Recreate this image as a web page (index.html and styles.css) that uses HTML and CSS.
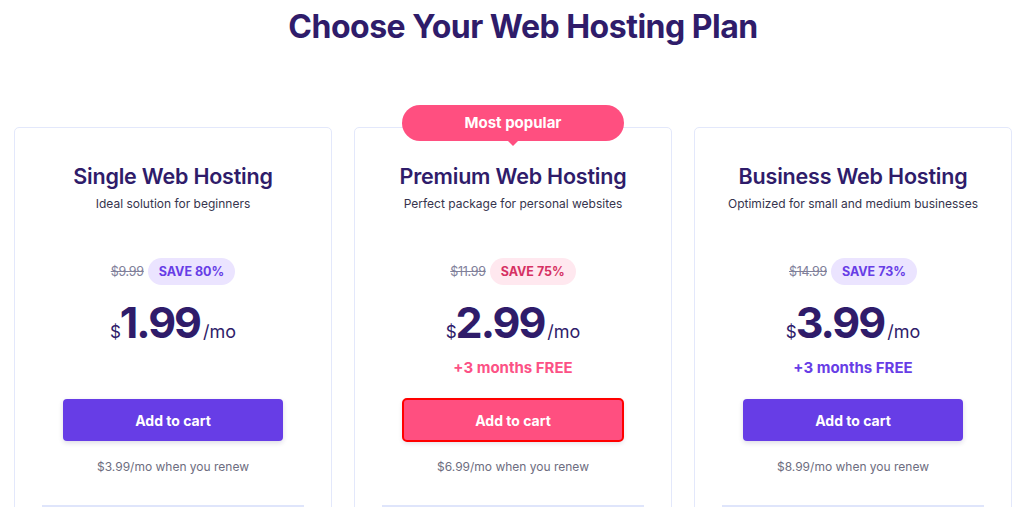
FILE: index.html
```html
<!DOCTYPE html>
<html lang="en">
<head>
<meta charset="utf-8">
<title>Choose Your Web Hosting Plan</title>
<link rel="stylesheet" href="styles.css">
</head>
<body>
<header class="header">
  <h1 class="title">Choose Your Web Hosting Plan</h1>
</header>
<main class="plans">
  <section class="card">
    <h2 class="card-title">Single Web Hosting</h2>
    <p class="card-sub">Ideal solution for beginners</p>
    <div class="discount">
      <span class="old">$9.99</span>
      <span class="save save-purple">SAVE 80%</span>
    </div>
    <div class="price"><span class="cur">$</span><span class="amount">1.99</span><span class="per">/mo</span></div>
    <div class="free free-empty"></div>
    <button class="cart">Add to cart</button>
    <p class="renew">$3.99/mo when you renew</p>
    <div class="divider"></div>
  </section>
  <section class="card card-popular">
    <div class="popular">Most popular</div>
    <h2 class="card-title">Premium Web Hosting</h2>
    <p class="card-sub">Perfect package for personal websites</p>
    <div class="discount">
      <span class="old">$11.99</span>
      <span class="save save-pink">SAVE 75%</span>
    </div>
    <div class="price"><span class="cur">$</span><span class="amount">2.99</span><span class="per">/mo</span></div>
    <div class="free free-pink">+3 months FREE</div>
    <button class="cart cart-pink">Add to cart</button>
    <p class="renew">$6.99/mo when you renew</p>
    <div class="divider"></div>
  </section>
  <section class="card">
    <h2 class="card-title">Business Web Hosting</h2>
    <p class="card-sub">Optimized for small and medium businesses</p>
    <div class="discount">
      <span class="old">$14.99</span>
      <span class="save save-purple">SAVE 73%</span>
    </div>
    <div class="price"><span class="cur">$</span><span class="amount">3.99</span><span class="per">/mo</span></div>
    <div class="free free-purple">+3 months FREE</div>
    <button class="cart">Add to cart</button>
    <p class="renew">$8.99/mo when you renew</p>
    <div class="divider"></div>
  </section>
</main>
</body>
</html>
```

FILE: styles.css
```css
* { box-sizing: border-box; }

html, body {
  margin: 0;
  padding: 0;
  background: #ffffff;
  overflow: hidden;
}

body {
  font-family: Inter, "Noto Sans", "DejaVu Sans", sans-serif;
  color: #2f1c6a;
}

.header {
  padding: 7px 0 0 22px;
}

.title {
  margin: 0;
  text-align: center;
  font-size: 32px;
  line-height: 40px;
  font-weight: 700;
  color: #2f1c6a;
  letter-spacing: -0.5px;
}

.plans {
  display: flex;
  gap: 22px;
  padding: 0 13px 0 14px;
  margin-top: 80px;
}

.card {
  position: relative;
  flex: 0 0 318px;
  height: 420px;
  border: 1px solid #e3e8fb;
  border-radius: 5px;
  padding-top: 34px;
  display: flex;
  flex-direction: column;
  align-items: center;
}

.popular {
  position: absolute;
  top: -23px;
  left: 50%;
  transform: translateX(-50%);
  width: 222px;
  height: 36px;
  border-radius: 18px;
  background: #ff4f80;
  color: #ffffff;
  font-size: 15px;
  font-weight: 700;
  line-height: 36px;
  text-align: center;
}

.popular::after {
  content: "";
  position: absolute;
  left: 50%;
  bottom: -5px;
  margin-left: -5px;
  border-left: 5px solid transparent;
  border-right: 5px solid transparent;
  border-top: 5px solid #ff4f80;
}

.card-title {
  margin: 0;
  font-size: 21.5px;
  line-height: 28px;
  font-weight: 600;
  color: #2f1c6a;
  letter-spacing: -0.2px;
}

.card-sub {
  margin: 5px 0 0;
  font-size: 12px;
  line-height: 18px;
  color: #36344d;
}

.discount {
  margin-top: 45px;
  display: flex;
  align-items: center;
  gap: 4px;
  height: 27px;
}

.old {
  font-size: 12.5px;
  color: #80809a;
  text-decoration: line-through;
  letter-spacing: -0.3px;
}

.save {
  height: 27px;
  line-height: 27px;
  padding: 0 11px;
  border-radius: 14px;
  font-size: 12.5px;
  font-weight: 700;
}

.save-purple {
  background: #ebe4ff;
  color: #673de6;
}

.save-pink {
  background: #ffe8ef;
  color: #d63163;
}

.price {
  margin-top: 13px;
  display: flex;
  align-items: baseline;
  height: 48px;
  line-height: 48px;
  color: #2f1c6a;
}

.cur {
  font-size: 17px;
  font-weight: 400;
  margin-right: -1px;
}

.amount {
  font-size: 43px;
  font-weight: 700;
  letter-spacing: -2px;
}

.per {
  font-size: 18px;
  font-weight: 400;
  margin-left: 3px;
}

.free {
  margin-top: 12px;
  height: 20px;
  font-size: 15px;
  line-height: 20px;
  font-weight: 700;
}

.free-pink { color: #fc5185; }
.free-purple { color: #673de6; }

.cart {
  margin-top: 21px;
  width: 220px;
  height: 42px;
  border: 0;
  border-radius: 4px;
  background: #673de6;
  color: #ffffff;
  font-family: inherit;
  font-size: 14px;
  font-weight: 700;
  cursor: pointer;
  box-shadow: 0 2px 5px rgba(30, 20, 80, 0.15);
}

.cart-pink {
  background: #ff4f80;
  outline: 2px solid #ff0000;
  outline-offset: -1px;
}

.renew {
  margin: 17px 0 0;
  font-size: 12px;
  line-height: 18px;
  color: #6d6d80;
}

.divider {
  margin-top: 29px;
  width: 262px;
  height: 3px;
  background: #dfe5fb;
}
```
